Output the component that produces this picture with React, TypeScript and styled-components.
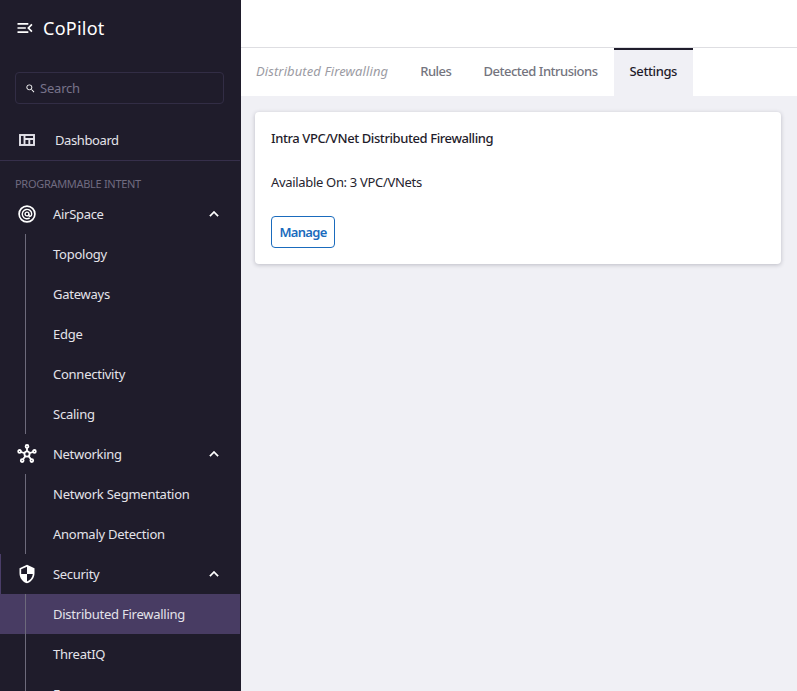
import styled, { createGlobalStyle } from 'styled-components';

const GlobalStyle = createGlobalStyle`
  html, body {
    margin: 0;
    height: 100%;
    overflow: hidden;
    font-family: 'Noto Sans', 'Roboto', sans-serif;
  }
  #root {
    height: 100%;
  }
`;

const Layout = styled.div`
  display: flex;
  width: 797px;
  height: 691px;
  overflow: hidden;
`;

const Sidebar = styled.aside`
  flex: 0 0 241px;
  box-sizing: border-box;
  height: 691px;
  overflow: hidden;
  background: #1f1c2b;
  border-right: 1px solid #1f1c2b;
`;

const Brand = styled.div`
  display: flex;
  align-items: center;
  gap: 8px;
  height: 56px;
  padding-left: 15px;
  color: #fff;
  font-size: 18px;
  letter-spacing: 0.25px;
`;

const SearchBox = styled.label`
  display: flex;
  align-items: center;
  gap: 4px;
  box-sizing: border-box;
  width: 209px;
  height: 32px;
  margin: 16px 0 16px 15px;
  padding-left: 9px;
  border: 1px solid #322d45;
  border-radius: 4px;
`;

const SearchInput = styled.input`
  flex: 1;
  min-width: 0;
  padding: 0;
  border: 0;
  outline: 0;
  background: transparent;
  color: #fff;
  font: 13px 'Noto Sans', sans-serif;
  letter-spacing: -0.2px;

  &::placeholder {
    color: #77738a;
    opacity: 1;
  }
`;

const DashboardRow = styled.div`
  display: flex;
  align-items: center;
  height: 41px;
  padding-left: 19px;
  gap: 20px;
  color: #e4e3ea;
  font-size: 13px;
  letter-spacing: -0.4px;
  border-bottom: 1px solid #362f4b;
  box-sizing: border-box;
`;

const SectionLabel = styled.div`
  display: flex;
  align-items: center;
  height: 33px;
  padding: 12px 0 0 15px;
  box-sizing: border-box;
  color: #6f6b80;
  font-size: 11px;
  letter-spacing: -0.3px;
`;

const GroupRow = styled.div<{ $current?: boolean }>`
  display: flex;
  align-items: center;
  height: 40px;
  box-sizing: border-box;
  padding-right: 17px;
  color: #e4e3ea;
  font-size: 13px;
  letter-spacing: -0.3px;
  border-left: 1px solid ${({ $current }) => ($current ? '#4a3d68' : 'transparent')};
`;

const GroupIcon = styled.span`
  display: flex;
  justify-content: center;
  width: 52px;
  flex: none;
`;

const GroupName = styled.span`
  flex: 1;
`;

const SubList = styled.div`
  position: relative;
`;

const SubLine = styled.span`
  position: absolute;
  left: 25px;
  top: 0;
  bottom: 0;
  width: 1px;
  background: #6d6a7b;
`;

const SubItem = styled.div<{ $active?: boolean }>`
  display: flex;
  align-items: center;
  height: 40px;
  padding-left: 53px;
  color: #e4e3ea;
  font-size: 13px;
  letter-spacing: -0.25px;
  background: ${({ $active }) => ($active ? '#483c63' : 'transparent')};
`;

const Main = styled.main`
  flex: 1;
  display: flex;
  flex-direction: column;
  min-width: 0;
  background: #f0f0f5;
`;

const TopBar = styled.header`
  height: 47px;
  flex: none;
  background: #fff;
  border-bottom: 1px solid #dedee2;
`;

const Tabs = styled.nav`
  display: flex;
  height: 48px;
  flex: none;
  background: #fff;
`;

const Tab = styled.div<{ $active?: boolean; $muted?: boolean }>`
  display: flex;
  align-items: center;
  box-sizing: border-box;
  padding: 0 16px 5px;
  border-top: 2px solid ${({ $active }) => ($active ? '#1f1c2b' : 'transparent')};
  background: ${({ $active }) => ($active ? '#f0f0f5' : 'transparent')};
  color: ${({ $active, $muted }) => ($active ? '#1f1c2b' : $muted ? '#9b9ba3' : '#74747e')};
  font-size: 13px;
  letter-spacing: ${({ $muted, $active }) => ($muted ? '0.1px' : $active ? '-0.4px' : '-0.48px')};
  font-weight: ${({ $muted }) => ($muted ? 400 : 500)};
  font-style: ${({ $muted }) => ($muted ? 'italic' : 'normal')};

  &:first-child {
    padding-left: 15px;
  }
`;

const Content = styled.div`
  padding: 16px;
  padding-left: 14px;
`;

const Card = styled.section`
  box-sizing: border-box;
  height: 152px;
  padding: 16px;
  background: #fff;
  border-radius: 4px;
  box-shadow: 0 1px 4px rgba(30, 30, 50, 0.25);
`;

const CardTitle = styled.h2`
  margin: 0 0 24px;
  color: #1f1c2b;
  font-size: 13px;
  letter-spacing: -0.41px;
  font-weight: 500;
  line-height: 21px;
`;

const CardText = styled.p`
  margin: 0 0 25px;
  color: #26242f;
  font-size: 13px;
  letter-spacing: -0.32px;
  line-height: 18px;
`;

const ManageButton = styled.button`
  display: block;
  width: 64px;
  height: 32px;
  padding: 0;
  border: 1px solid #1a6bbd;
  border-radius: 4px;
  background: #fff;
  color: #1a6bbd;
  font: 600 13px 'Noto Sans', sans-serif;
  letter-spacing: -0.7px;
`;

const ChevronUp = () => (
  <svg width="18" height="18" viewBox="0 0 24 24" fill="#fff" stroke="#fff" strokeWidth="0.5">
    <path d="M12 8l-6 6 1.41 1.41L12 10.83l4.59 4.58L18 14z" />
  </svg>
);

const MenuIcon = () => (
  <svg width="20" height="20" viewBox="0 0 24 24" fill="#fff">
    <path d="M3 18h13v-2H3v2zm0-5h10v-2H3v2zm0-7v2h13V6H3zm18 9.59L17.42 12 21 8.41 19.59 7l-5 5 5 5L21 15.59z" />
  </svg>
);

const SearchIcon = () => (
  <svg width="11" height="11" viewBox="0 0 24 24" fill="#fff">
    <path d="M15.5 14h-.79l-.28-.27C15.41 12.59 16 11.11 16 9.5 16 5.91 13.09 3 9.5 3S3 5.91 3 9.5 5.91 16 9.5 16c1.61 0 3.09-.59 4.23-1.57l.27.28v.79l5 4.99L20.49 19l-4.99-5zm-6 0C7.01 14 5 11.99 5 9.5S7.01 5 9.5 5 14 7.01 14 9.5 11.99 14 9.5 14z" />
  </svg>
);

const DashboardIcon = () => (
  <svg width="16" height="12" viewBox="0 0 16 12" fill="none" stroke="#e4e3ea" strokeWidth="1.9">
    <rect x="1" y="1" width="14" height="10" />
    <path d="M5.5 1v10M5.5 5h10M10.3 5v6" />
  </svg>
);

const AirSpaceIcon = () => (
  <svg width="18" height="18" viewBox="0 0 18 18" fill="none" stroke="#fff" strokeWidth="1.4">
    <circle cx="9" cy="9" r="7.9" strokeWidth="1.7" />
    <circle cx="9" cy="9" r="1.9" />
    <path d="M10.9 9v1.3c0 1.4 2.8 1.6 2.8-1.3A4.7 4.7 0 1 0 11.7 12.9" />
  </svg>
);

const NetworkIcon = () => (
  <svg width="20" height="20" viewBox="0 0 20 20" fill="none" stroke="#fff" strokeWidth="1.8">
    <circle cx="10" cy="10" r="2.6" />
    <circle cx="10" cy="2.4" r="1.4" />
    <circle cx="2.6" cy="7.4" r="1.4" />
    <circle cx="17.4" cy="7.4" r="1.4" />
    <circle cx="5.2" cy="16.6" r="1.4" />
    <circle cx="14.8" cy="16.6" r="1.4" />
    <path d="M10 4v3.4M4 8l3.6 1.2M16 8l-3.6 1.2M6 15.3l2.4-3.2M14 15.3l-2.4-3.2" />
  </svg>
);

const ShieldIcon = () => (
  <svg width="20" height="20" viewBox="0 0 24 24" fill="#fff">
    <path d="M12 1L3 5v6c0 5.55 3.84 10.74 9 12 5.16-1.26 9-6.45 9-12V5l-9-4zm0 10.99h7c-.53 4.12-3.28 7.79-7 8.94V12H5V6.3l7-3.11v8.8z" />
  </svg>
);

const App = () => (
  <>
    <GlobalStyle />
    <Layout>
      <Sidebar>
        <Brand>
          <MenuIcon />
          CoPilot
        </Brand>
        <SearchBox>
          <SearchIcon />
          <SearchInput placeholder="Search" />
        </SearchBox>
        <DashboardRow>
          <DashboardIcon />
          Dashboard
        </DashboardRow>
        <SectionLabel>PROGRAMMABLE INTENT</SectionLabel>
        <GroupRow>
          <GroupIcon><AirSpaceIcon /></GroupIcon>
          <GroupName>AirSpace</GroupName>
          <ChevronUp />
        </GroupRow>
        <SubList>
          <SubLine />
          <SubItem>Topology</SubItem>
          <SubItem>Gateways</SubItem>
          <SubItem>Edge</SubItem>
          <SubItem>Connectivity</SubItem>
          <SubItem>Scaling</SubItem>
        </SubList>
        <GroupRow>
          <GroupIcon><NetworkIcon /></GroupIcon>
          <GroupName>Networking</GroupName>
          <ChevronUp />
        </GroupRow>
        <SubList>
          <SubLine />
          <SubItem>Network Segmentation</SubItem>
          <SubItem>Anomaly Detection</SubItem>
        </SubList>
        <GroupRow $current>
          <GroupIcon><ShieldIcon /></GroupIcon>
          <GroupName>Security</GroupName>
          <ChevronUp />
        </GroupRow>
        <SubList>
          <SubItem $active>Distributed Firewalling</SubItem>
          <SubItem>ThreatIQ</SubItem>
          <SubItem>Egress</SubItem>
          <SubLine />
        </SubList>
      </Sidebar>
      <Main>
        <TopBar />
        <Tabs>
          <Tab $muted>Distributed Firewalling</Tab>
          <Tab>Rules</Tab>
          <Tab>Detected Intrusions</Tab>
          <Tab $active>Settings</Tab>
        </Tabs>
        <Content>
          <Card>
            <CardTitle>Intra VPC/VNet Distributed Firewalling</CardTitle>
            <CardText>Available On: 3 VPC/VNets</CardText>
            <ManageButton>Manage</ManageButton>
          </Card>
        </Content>
      </Main>
    </Layout>
  </>
);

export default App;
